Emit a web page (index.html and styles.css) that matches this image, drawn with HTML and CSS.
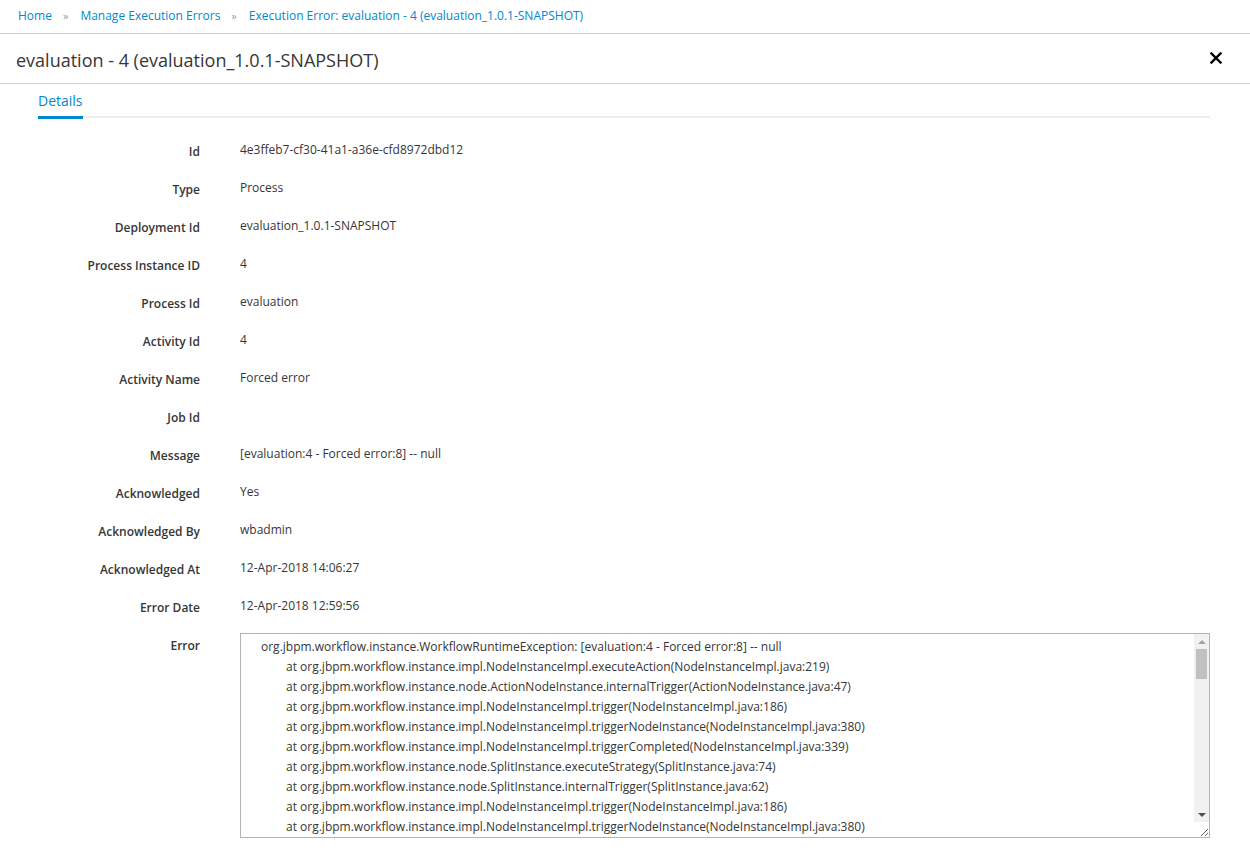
FILE: index.html
```html
<!DOCTYPE html>
<html>
<head>
<meta charset="utf-8">
<link rel="stylesheet" href="styles.css">
</head>
<body>
<nav class="breadcrumb">
  <a class="crumb">Home</a><span class="sep">»</span>
  <a class="crumb">Manage Execution Errors</a><span class="sep">»</span>
  <a class="crumb">Execution Error: evaluation - 4 (evaluation_1.0.1-SNAPSHOT)</a>
</nav>
<header class="title-bar">
  <h1 class="title">evaluation - 4 (evaluation_1.0.1-SNAPSHOT)</h1>
  <span class="close"><svg width="12" height="12" viewBox="0 0 12 12"><path d="M1.5 1.5 L10.5 10.5 M10.5 1.5 L1.5 10.5" stroke="#030303" stroke-width="2.4" stroke-linecap="square"/></svg></span>
</header>
<section class="content">
  <div class="tabs"><span class="tab active">Details</span></div>
  <div class="form">
    <div class="row"><div class="label">Id</div><div class="value">4e3ffeb7-cf30-41a1-a36e-cfd8972dbd12</div></div>
    <div class="row"><div class="label">Type</div><div class="value">Process</div></div>
    <div class="row"><div class="label">Deployment Id</div><div class="value">evaluation_1.0.1-SNAPSHOT</div></div>
    <div class="row"><div class="label">Process Instance ID</div><div class="value">4</div></div>
    <div class="row"><div class="label">Process Id</div><div class="value">evaluation</div></div>
    <div class="row"><div class="label">Activity Id</div><div class="value">4</div></div>
    <div class="row"><div class="label">Activity Name</div><div class="value">Forced error</div></div>
    <div class="row"><div class="label">Job Id</div><div class="value"></div></div>
    <div class="row"><div class="label">Message</div><div class="value">[evaluation:4 - Forced error:8] -- null</div></div>
    <div class="row"><div class="label">Acknowledged</div><div class="value">Yes</div></div>
    <div class="row"><div class="label">Acknowledged By</div><div class="value">wbadmin</div></div>
    <div class="row"><div class="label">Acknowledged At</div><div class="value">12-Apr-2018 14:06:27</div></div>
    <div class="row"><div class="label">Error Date</div><div class="value">12-Apr-2018 12:59:56</div></div>
    <div class="row last"><div class="label">Error</div><div class="value"><div class="error-wrap"><textarea class="error-text" readonly>org.jbpm.workflow.instance.WorkflowRuntimeException: [evaluation:4 - Forced error:8] -- null
&#9;at org.jbpm.workflow.instance.impl.NodeInstanceImpl.executeAction(NodeInstanceImpl.java:219)
&#9;at org.jbpm.workflow.instance.node.ActionNodeInstance.internalTrigger(ActionNodeInstance.java:47)
&#9;at org.jbpm.workflow.instance.impl.NodeInstanceImpl.trigger(NodeInstanceImpl.java:186)
&#9;at org.jbpm.workflow.instance.impl.NodeInstanceImpl.triggerNodeInstance(NodeInstanceImpl.java:380)
&#9;at org.jbpm.workflow.instance.impl.NodeInstanceImpl.triggerCompleted(NodeInstanceImpl.java:339)
&#9;at org.jbpm.workflow.instance.node.SplitInstance.executeStrategy(SplitInstance.java:74)
&#9;at org.jbpm.workflow.instance.node.SplitInstance.internalTrigger(SplitInstance.java:62)
&#9;at org.jbpm.workflow.instance.impl.NodeInstanceImpl.trigger(NodeInstanceImpl.java:186)
&#9;at org.jbpm.workflow.instance.impl.NodeInstanceImpl.triggerNodeInstance(NodeInstanceImpl.java:380)
&#9;at org.jbpm.workflow.instance.impl.NodeInstanceImpl.triggerCompleted(NodeInstanceImpl.java:339)
&#9;at org.jbpm.workflow.instance.node.StartNodeInstance.triggerCompleted(StartNodeInstance.java:73)
&#9;at org.jbpm.workflow.instance.node.StartNodeInstance.internalTrigger(StartNodeInstance.java:49)
&#9;at org.jbpm.workflow.instance.impl.NodeInstanceImpl.trigger(NodeInstanceImpl.java:186)
&#9;at org.jbpm.ruleflow.instance.RuleFlowProcessInstance.internalStart(RuleFlowProcessInstance.java:38)
&#9;at org.jbpm.process.instance.impl.ProcessInstanceImpl.start(ProcessInstanceImpl.java:244)
&#9;at org.jbpm.workflow.instance.impl.WorkflowProcessInstanceImpl.start(WorkflowProcessInstanceImpl.java:466)
&#9;at org.jbpm.process.instance.ProcessRuntimeImpl.startProcessInstance(ProcessRuntimeImpl.java:220)
&#9;at org.drools.core.impl.StatefulKnowledgeSessionImpl.startProcessInstance(StatefulKnowledgeSessionImpl.java:1836)
&#9;at java.lang.Thread.run(Thread.java:748)</textarea><div class="scrollbar"><div class="sb-btn"><span class="arrow-up"></span></div><div class="sb-track"><div class="sb-thumb"></div></div><div class="sb-btn"><span class="arrow-down"></span></div></div></div></div></div>
  </div>
</section>
</body>
</html>
```
FILE: styles.css
```css
html, body {
  margin: 0;
  padding: 0;
  background: #fff;
}
body {
  font-family: "Open Sans", "Liberation Sans", sans-serif;
  font-size: 12px;
  color: #363636;
  width: 1250px;
  height: 855px;
  overflow: hidden;
}
.breadcrumb {
  height: 34px;
  box-sizing: border-box;
  border-bottom: 1px solid #d1d1d1;
  display: flex;
  align-items: center;
  padding-left: 18px;
  line-height: 20px;
  padding-bottom: 1px;
}
.crumb {
  color: #0088ce;
}
.sep {
  color: #9c9c9c;
  margin: 0 12px 0 11px;
  font-size: 11px;
}
.title-bar {
  height: 50px;
  box-sizing: border-box;
  border-bottom: 1px solid #d1d1d1;
  display: flex;
  align-items: center;
  justify-content: space-between;
  padding: 0 28px 0 16px;
}
.title {
  margin: 0;
  font-size: 18px;
  font-weight: 400;
  color: #363636;
  line-height: 24px;
  padding-top: 2px;
}
.close {
  display: flex;
  width: 12px;
  height: 12px;
  padding-bottom: 1px;
}
.content {
  margin: 0 40px 0 38px;
}
.tabs {
  border-bottom: 2px solid #ededed;
  height: 34px;
  box-sizing: border-box;
  display: flex;
}
.tab {
  font-size: 14px;
  color: #0088ce;
  line-height: 18px;
  padding-top: 8px;
  box-sizing: border-box;
  height: 34px;
}
.tab.active {
  border-bottom: 3px solid #0088ce;
  margin-bottom: -2px;
  height: 35px;
}
.form {
  padding-top: 22px;
}
.row {
  display: flex;
  height: 38px;
}
.label {
  width: 162px;
  flex: none;
  text-align: right;
  font-weight: 600;
  line-height: 20px;
  padding-top: 2px;
}
.value {
  margin-left: 40px;
  flex: 1;
  line-height: 20px;
}
.row.last .value {
  margin-top: -1px;
}
.error-wrap {
  position: relative;
  width: 970px;
  height: 205px;
}
.error-text {
  display: block;
  box-sizing: border-box;
  width: 970px;
  height: 205px;
  margin: 0;
  border: 1px solid #b4b4b4;
  padding: 3px 6px 0 20px;
  font-family: "Open Sans", "Liberation Sans", sans-serif;
  font-size: 12px;
  line-height: 20px;
  color: #363636;
  tab-size: 25px;
  -moz-tab-size: 25px;
  white-space: pre;
  overflow: hidden;
  resize: both;
  outline: none;
}
.scrollbar {
  position: absolute;
  top: 1px;
  right: 1px;
  bottom: 16px;
  width: 15px;
  background: #f1f1f1;
  display: flex;
  flex-direction: column;
}
.sb-btn {
  height: 15px;
  flex: none;
  display: flex;
  align-items: center;
  justify-content: center;
}
.arrow-up {
  width: 0;
  height: 0;
  border-left: 4px solid transparent;
  border-right: 4px solid transparent;
  border-bottom: 4px solid #a3a3a3;
}
.arrow-down {
  width: 0;
  height: 0;
  border-left: 4px solid transparent;
  border-right: 4px solid transparent;
  border-top: 4px solid #505050;
}
.sb-track {
  flex: 1;
  padding: 0 2px;
}
.sb-thumb {
  height: 30px;
  background: #c1c1c1;
}
```
